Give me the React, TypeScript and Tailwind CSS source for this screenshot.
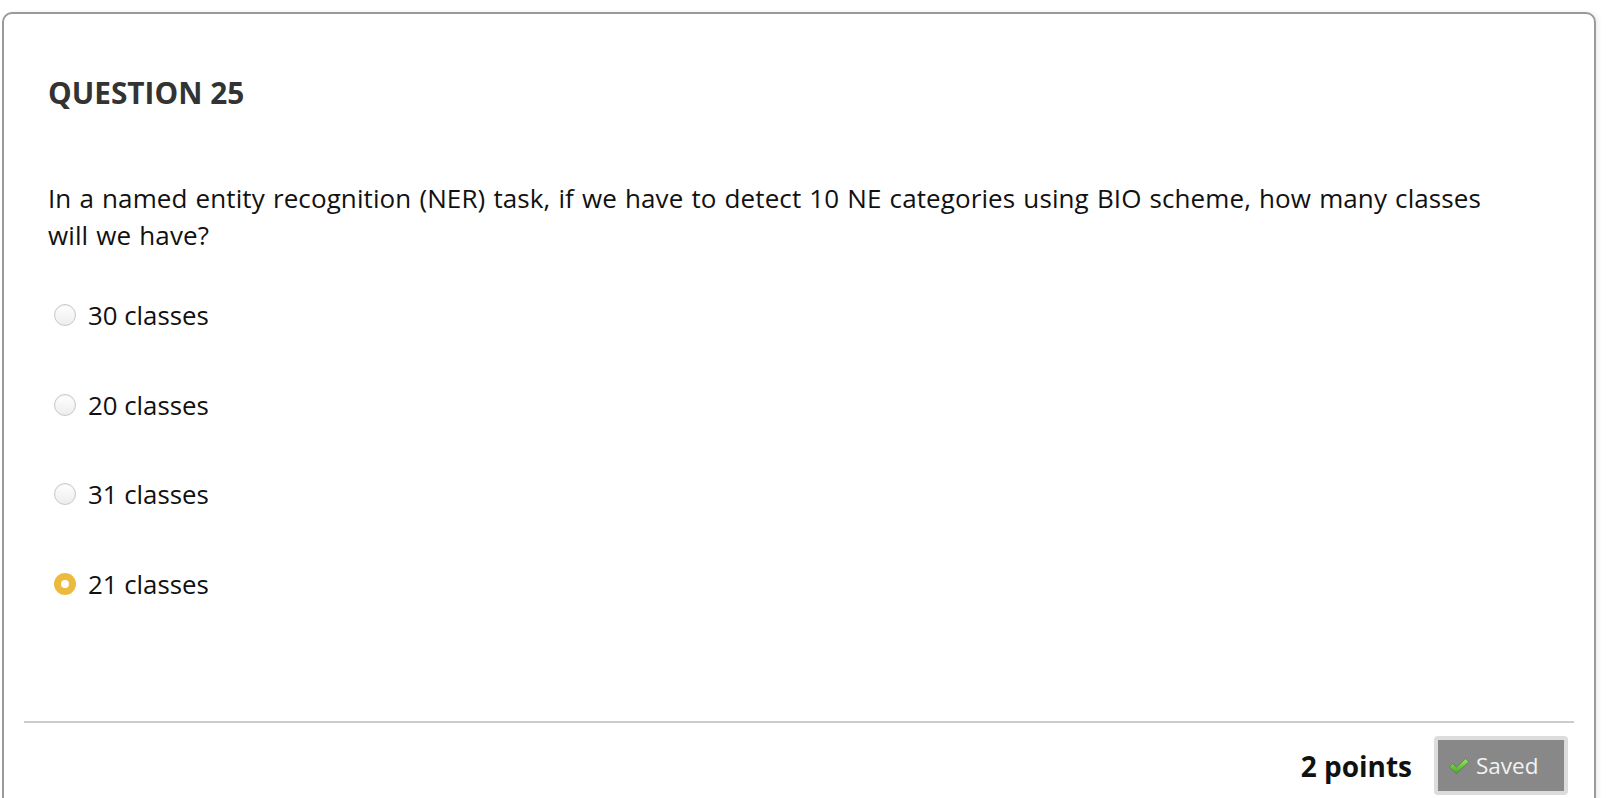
import React from "react";

function Radio({ checked }: { checked?: boolean }) {
  if (checked) {
    return (
      <span className="flex h-[22px] w-[22px] items-center justify-center rounded-full bg-[#ecbb3d]">
        <span className="h-[8px] w-[8px] rounded-full bg-white" />
      </span>
    );
  }
  return (
    <span className="block h-[22px] w-[22px] rounded-full border border-[#c8c8c8] bg-gradient-to-b from-[#ffffff] to-[#ededed] shadow-[inset_0_1px_1px_rgba(0,0,0,0.06)]" />
  );
}

function Option({ label, checked }: { label: string; checked?: boolean }) {
  return (
    <div className="flex h-[32px] items-center">
      <div className="ml-[6px] mr-[12px]">
        <Radio checked={checked} />
      </div>
      <span className="text-[25.8px] leading-[32px] text-[#111]">{label}</span>
    </div>
  );
}

export default function App() {
  return (
    <div
      className="h-[798px] w-[1612px] overflow-hidden bg-white pl-[2px] pt-[12px]"
      style={{ fontFamily: '"Open Sans", "Noto Sans", sans-serif' }}
    >
      <div className="h-[830px] w-[1594px] rounded-[10px] border-2 border-[#9a9a9a] bg-white shadow-[3px_0_4px_rgba(0,0,0,0.06)]">
        <div className="pl-[44px] pt-[60px] pr-[90px]">
          <h1 className="text-[29.8px] font-bold leading-[38px] text-[#333]">QUESTION 25</h1>
          <p className="mt-[68px] text-[26px] leading-[37px] tracking-[0.1px] [word-spacing:1.2px] text-[#111]">
            In a named entity recognition (NER) task, if we have to detect 10 NE categories using BIO
            scheme, how many classes will we have?
          </p>
          <div className="mt-[45px] flex flex-col gap-[57.7px]">
            <Option label="30 classes" />
            <Option label="20 classes" />
            <Option label="31 classes" />
            <Option label="21 classes" checked />
          </div>
        </div>
        <div className="ml-[20px] mr-[20px] mt-[121px] h-[2px] bg-[#cccccc]" />
        <div className="mr-[26px] mt-[13px] flex items-center justify-end gap-[22px]">
          <span className="text-[28px] font-bold text-[#111]">2 points</span>
          <div className="rounded-[4px] bg-[#dcdcdc] p-[4px]">
            <div className="flex h-[51px] w-[126px] items-center gap-[6px] bg-[#888888] pl-[10px]">
              <svg width="22" height="20" viewBox="0 0 22 20">
                <defs>
                  <linearGradient id="chk" x1="0" y1="0" x2="0" y2="1">
                    <stop offset="0" stopColor="#9be468" />
                    <stop offset="1" stopColor="#4aa62a" />
                  </linearGradient>
                </defs>
                <path
                  d="M1.2 10.8 L4.6 7.6 L8.3 11.2 L17.6 2.6 L20.8 5.8 L8.3 17.6 Z"
                  fill="url(#chk)"
                  stroke="#3d8a22"
                  strokeWidth="0.7"
                  strokeLinejoin="round"
                />
              </svg>
              <span className="text-[22.5px] text-[#f2f2f2]">Saved</span>
            </div>
          </div>
        </div>
      </div>
    </div>
  );
}
